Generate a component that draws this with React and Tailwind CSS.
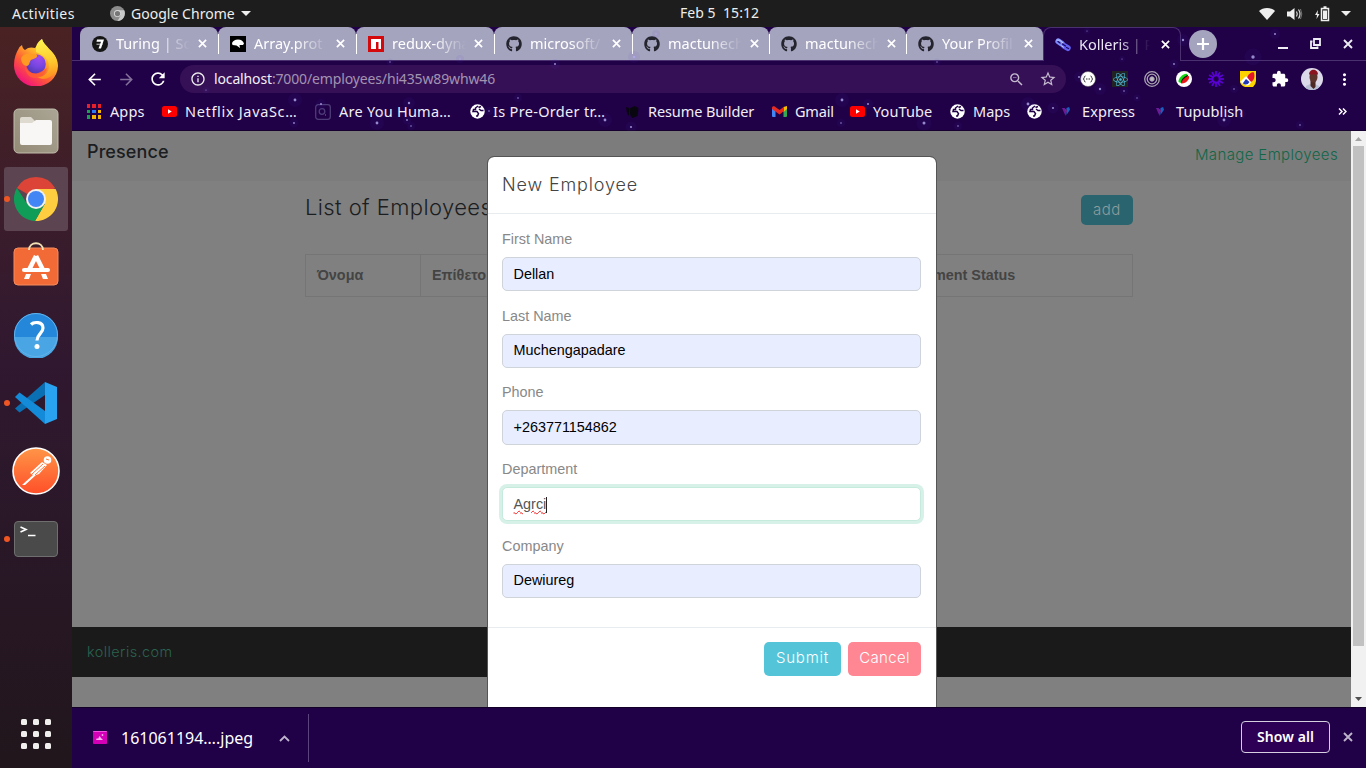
import React from "react";
import {
  MdArrowBack,
  MdArrowForward,
  MdRefresh,
  MdInfoOutline,
  MdZoomOut,
  MdStarBorder,
  MdExtension,
  MdMoreVert,
} from "react-icons/md";
import { FaGithub, FaReact } from "react-icons/fa";

/* ---------- dock icons ---------- */

function FirefoxIcon() {
  return (
    <svg width="46" height="48" viewBox="0 0 46 48" className="-mt-[3px]">
      <defs>
        <linearGradient id="ffBody" x1="0.85" y1="0.1" x2="0.25" y2="0.95">
          <stop offset="0" stopColor="#fff14a" />
          <stop offset="0.35" stopColor="#ffb02b" />
          <stop offset="0.65" stopColor="#ff5a36" />
          <stop offset="1" stopColor="#f0147c" />
        </linearGradient>
        <radialGradient id="ffGlobe" cx="0.65" cy="0.2" r="0.9">
          <stop offset="0" stopColor="#a04bf0" />
          <stop offset="0.5" stopColor="#7646e0" />
          <stop offset="1" stopColor="#4a36a8" />
        </radialGradient>
        <linearGradient id="ffTail" x1="0.5" y1="0" x2="0.6" y2="1">
          <stop offset="0" stopColor="#fff44f" />
          <stop offset="0.6" stopColor="#ffc62c" />
          <stop offset="1" stopColor="#ff8a1f" />
        </linearGradient>
      </defs>
      <path d="M6 10c0-1 2-2 3-3 .5 3 1.500 4 3 5 3-3 7-3 10-2 2-3 4-5 7-9 1 4 4 6 8 11l1 1c5 5 7 10 7 15A22 21 0 0 1 1 27c0-7 2-12 5-17z" fill="url(#ffBody)" />
      <path d="M23 9c1-4 3-6 6-8 1 4 4 6 7 10 5 4 8 9 8 15 0 6-3 11-7 13-5 3-10 2-13 0 8 0 12-5 12-11 0-7-6-11-13-14z" fill="url(#ffTail)" />
      <circle cx="23" cy="26" r="9.800" fill="url(#ffGlobe)" />
      <path d="M8 20c2-4 6-5 9-4 4 0 6-1 7 1 1 3-4 4-6 5-2 2-1 5-4 6-3 0-6-3-6-8z" fill="#ff9a22" />
      <path d="M12 28c2 6 8 9 13 7 3-1 5-3 9-5-2 7-7 10-12 10-6 0-10-5-10-12z" fill="#ff5f30" opacity=".75" />
    </svg>
  );
}

function FilesIcon() {
  return (
    <svg width="46" height="46" viewBox="0 0 46 46">
      <defs>
        <linearGradient id="filesBg" x1="0" y1="1" x2="1" y2="0">
          <stop offset="0" stopColor="#948b76" />
          <stop offset="1" stopColor="#aaa595" />
        </linearGradient>
      </defs>
      <rect x="1" y="1" width="44" height="44" rx="4.500" fill="url(#filesBg)" stroke="#c2bdad" strokeWidth="1" />
      <path d="M7 11a2 2 0 0 1 2-2h9l4 4h14a2 2 0 0 1 2 2v5H7z" fill="#dedad0" />
      <path d="M7 15h12l4-3h14a2 2 0 0 1 2 2v21a2 2 0 0 1-2 2H9a2 2 0 0 1-2-2z" fill="#f8f7f5" />
    </svg>
  );
}

function ChromeIcon() {
  return (
    <svg width="46" height="46" viewBox="0 0 46 46">
      <path d="M23 23 3.900 12A22 22 0 0 1 42.100 12z" fill="#db4437" />
      <path d="M23 13h19.600a22 22 0 0 1-20.600 32l9.700-17z" fill="#ffcd40" />
      <path d="M14.300 28 3.900 12A22 22 0 0 0 22 45l9.700-17z" fill="#0f9d58" />
      <circle cx="23" cy="23" r="10" fill="#f1f1f1" />
      <circle cx="23" cy="23" r="8" fill="#4285f4" />
    </svg>
  );
}

function SoftwareIcon() {
  return (
    <svg width="46" height="46" viewBox="0 0 46 46" className="-mt-2">
      <rect x="1" y="8" width="44" height="37" rx="4" fill="#f26a35" stroke="#f58c5e" strokeWidth="1" />
      <path d="M16 10c0-9 14-9 14 0" fill="none" stroke="#f3dfb4" strokeWidth="1.800" />
      <path d="M23 16l7 14M23 16l-7 14" stroke="#fff" strokeWidth="4.500" fill="none" strokeLinejoin="round" />
      <rect x="9" y="28" width="28" height="4" rx="2" fill="#fff" />
      <path d="M13 34h5l-2 5h-5zM28 34h5l2 5h-5z" fill="#fff" />
    </svg>
  );
}

function HelpIcon() {
  return (
    <svg width="46" height="46" viewBox="0 0 46 46">
      <circle cx="23" cy="23" r="22" fill="#2487d9" />
      <path d="M1 25a22 22 0 0 0 44 0z" fill="#49a5e4" />
      <circle cx="23" cy="23" r="21.500" fill="none" stroke="#62b2ea" strokeWidth="1" />
      <path d="M18 12.500c3-3 12-3 12 3.500 0 5.500-6 6-6 12.500" fill="none" stroke="#fff" strokeWidth="3.200" />
      <circle cx="24" cy="34.500" r="2.500" fill="#fff" />
    </svg>
  );
}

function CodeIcon() {
  return (
    <svg width="46" height="46" viewBox="0 0 46 46">
      <path d="M2 28.500 32 2v13L6.500 32.500z" fill="#0b6fb3" />
      <path d="M6.500 12.500 2 17 32 44V31z" fill="#148bd8" />
      <path d="M32 2l12 5v32l-12 5z" fill="#29a3f0" />
    </svg>
  );
}

function PostmanIcon() {
  return (
    <svg width="50" height="50" viewBox="0 0 50 50">
      <defs>
        <linearGradient id="pm" x1="0" y1="0" x2="0" y2="1">
          <stop offset="0" stopColor="#ff9547" />
          <stop offset="1" stopColor="#ff4f29" />
        </linearGradient>
      </defs>
      <circle cx="25" cy="25" r="23" fill="url(#pm)" stroke="#fff" strokeWidth="1.600" />
      <circle cx="36.500" cy="14" r="3.800" fill="#fff" />
      <path d="M31 16 19 27l3 2-11 10 3 0 11-10 3-1 8-9z" fill="#fff" />
      <path d="M32 18 21 28M34 20 24 29M35 13l3 1" stroke="#ff7a3d" strokeWidth="1" />
    </svg>
  );
}

function TerminalIcon() {
  return (
    <div className="flex h-9 w-11 items-start rounded-[4px] border border-[#6f6f6f] bg-[#4a4a4a] pt-[3px] pl-[5px]">
      <svg width="16" height="12" viewBox="0 0 16 12" fill="none" stroke="#fff" strokeWidth="1.600">
        <path d="M.5 2 6 4.500.5 7M8 10.500h7.500" />
      </svg>
    </div>
  );
}

const dock = [
  { icon: <FirefoxIcon /> },
  { icon: <FilesIcon /> },
  { icon: <ChromeIcon />, running: true, active: true },
  { icon: <SoftwareIcon /> },
  { icon: <HelpIcon /> },
  { icon: <CodeIcon />, running: true },
  { icon: <PostmanIcon /> },
  { icon: <TerminalIcon />, running: true },
];

function Dock() {
  return (
    <aside className="flex w-[72px] shrink-0 flex-col items-center bg-linear-to-b from-[#4a2223] via-[#301830] via-45% to-[#21161c] pt-1 pb-[13px]">
      <div className="flex flex-col gap-1">
        {dock.map((d, i) => (
          <div
            key={i}
            className={
              d.active
                ? "relative flex h-16 w-16 items-center justify-center rounded-[3px] bg-[#5c4450]"
                : "relative flex h-16 w-16 items-center justify-center"
            }
          >
            {d.icon}
            {d.running && <span className="absolute top-[29px] left-0 h-1.5 w-1.5 rounded-full bg-[#ef5623]" />}
          </div>
        ))}
      </div>
      <div className="mt-auto grid grid-cols-3 gap-1.5 pb-[6px]">
        {Array.from({ length: 9 }, (_, i) => (
          <span key={i} className="h-1.5 w-1.5 rounded-[1.5px] bg-[#f1efee]" />
        ))}
      </div>
    </aside>
  );
}

/* ---------- system bar ---------- */

function SystemBar() {
  return (
    <header className="grid h-[27px] shrink-0 grid-cols-[680px_200px_1fr] items-center bg-[#1d1d1d] text-[14px] text-[#eeeeec]">
      <div className="flex items-center pl-3">
        <span className="w-[98px] tracking-[0.45px]">Activities</span>
        <svg width="15" height="15" viewBox="0 0 16 16" className="mr-1.5">
          <circle cx="8" cy="8" r="8" fill="#8c8c8c" />
          <path d="M8 4.500h7a8 8 0 0 1-7 11.500l3.500-6z" fill="#c9c9c9" />
          <circle cx="8" cy="8" r="3.800" fill="#d8d8d8" />
          <circle cx="8" cy="8" r="2.800" fill="#777" />
        </svg>
        <span className="tracking-[0.03px]">Google Chrome</span>
        <svg width="10" height="5" viewBox="0 0 10 5" className="ml-1.5">
          <path d="M0 0h10L5 5z" fill="#eee" />
        </svg>
      </div>
      <span className="-mt-0.5 tracking-[0.05px] whitespace-pre">{"Feb 5  15:12"}</span>
      <div className="flex items-center justify-end pr-[15px]">
        <svg width="16" height="13" viewBox="0 0 16 13" className="mr-3">
          <path d="M0 4c4-4 12-4 16 0L8 13z" fill="#eee" />
        </svg>
        <svg width="16" height="14" viewBox="0 0 16 14" className="mr-3">
          <path d="M0 4.500h3L7.500 1v12L3 9.500H0z" fill="#eee" />
          <path d="M9.500 4.500q1.500 2.500 0 5M11.500 2.500q3 4.500 0 9" stroke="#ddd" fill="none" strokeWidth="1.200" />
          <path d="M13.500 2q2.600 5 0 10" stroke="#777" fill="none" />
        </svg>
        <svg width="15" height="16" viewBox="0 0 15 16" className="mr-[11px]">
          <path d="M3 4 0 9h2l-.500 4 3-5H2.500z" fill="#eee" />
          <path d="M6.500 2.500h7v12h-7zM8.500 1h3" stroke="#eee" strokeWidth="1.500" fill="none" />
          <path d="M8 4.500h4v8.500H8z" fill="#eee" />
        </svg>
        <svg width="10" height="5" viewBox="0 0 10 5">
          <path d="M0 0h10L5 5z" fill="#eee" />
        </svg>
      </div>
    </header>
  );
}

/* ---------- browser chrome ---------- */

const stars = [
  [295, 100, 1.4], [321, 104, 1], [377, 123, 1.4], [294, 123, 0.9], [411, 126, 0.8], [381, 115, 0.7],
  [390, 62, 0.7], [555, 64, 1], [518, 98, 0.8], [409, 103, 1.2], [407, 120, 0.9], [605, 120, 1.4], [631, 127, 1.1],
  [489, 111, 0.8], [842, 100, 1.4], [868, 104, 1], [924, 123, 1.5], [841, 123, 0.8], [958, 126, 0.8], [937, 62, 0.7],
  [1028, 104, 1.4], [1053, 108, 1.1], [1079, 77, 1], [1100, 89, 1.2], [1124, 91, 0.8], [1137, 98, 0.7],
  [1174, 64, 0.9], [1183, 40, 1.2], [1275, 34, 1], [1253, 57, 1.7], [1234, 89, 0.8], [1224, 120, 1.4],
  [1300, 125, 0.8], [1241, 114, 1], [634, 57, 1.2], [460, 59, 0.8], [656, 34, 0.8], [1122, 59, 0.6], [206, 90, 0.6], [1087, 31, 0.6],
];

function Stars() {
  return (
    <svg className="pointer-events-none absolute inset-0" width="1294" height="104" viewBox="72 27 1294 104">
      {stars.map(([x, y, r], i) => (
        <g key={i}>
          <circle cx={x} cy={y} r={r * 5} fill="#5a3ad0" opacity="0.07" />
          <circle cx={x} cy={y} r={r} fill="#b4abf0" opacity="0.8" />
        </g>
      ))}
    </svg>
  );
}

function Cross({ size = 10, color = "#fff", className = "" }) {
  return (
    <svg width={size} height={size} viewBox="0 0 10 10" fill="none" stroke={color} strokeWidth="1.900" className={"shrink-0 " + className}>
      <path d="M1 1l8 8M9 1l-8 8" />
    </svg>
  );
}

function TuringIcon() {
  return (
    <svg width="16" height="16" viewBox="0 0 16 16">
      <circle cx="8" cy="8" r="8" fill="#151515" />
      <path d="M5 3.500h7L9 12.500H6.500L9 5.800H4.500z" fill="#fff" />
      <path d="M4.500 8.200h6" stroke="#fff" strokeWidth=".8" />
    </svg>
  );
}

function MdnIcon() {
  return (
    <svg width="16" height="16" viewBox="0 0 16 16">
      <path d="M0 0h16v16H0z" fill="#000" />
      <path d="M2 7c1-2 3-3.500 6-3.500s5 1.500 6 4l-1 1.500H9.500L10 12 6.500 9.500 2.500 9z" fill="#fff" />
    </svg>
  );
}

function NpmIcon() {
  return (
    <svg width="16" height="16" viewBox="0 0 16 16">
      <path d="M0 0h16v16H0z" fill="#d4090b" />
      <path d="M3 3h10v10h-2.500V6H8v7H3z" fill="#fff" />
    </svg>
  );
}

function ChainIcon() {
  return (
    <svg width="16" height="14" viewBox="0 0 16 14">
      <rect x="0" y="1.500" width="10" height="6" rx="3" transform="rotate(35 5 4.500)" fill="#7f8cff" />
      <rect x="6" y="6" width="10" height="6" rx="3" transform="rotate(30 11 9)" fill="#6460f2" />
      <path d="M3 3.500l2 1.500M7.500 6l3 2M11.500 9.500l2 1" stroke="#1c0a60" strokeWidth="1.300" strokeLinecap="round" />
      <path d="M1.500 2Q5 1 8 5M6 7.500l3 2" stroke="#bccaff" strokeWidth="1" fill="none" />
    </svg>
  );
}

const tabs = [
  { icon: <TuringIcon />, title: "Turing | So", wide: true },
  { icon: <MdnIcon />, title: "Array.prot", wide: true },
  { icon: <NpmIcon />, title: "redux-dyna", wide: true },
  { icon: <FaGithub size={16} color="#24242e" />, title: "microsoft/", wide: true },
  { icon: <FaGithub size={16} color="#24242e" />, title: "mactunech" },
  { icon: <FaGithub size={16} color="#24242e" />, title: "mactunech" },
  { icon: <FaGithub size={16} color="#24242e" />, title: "Your Profil" },
];

function Tab({ icon, title, active, first, wide }) {
  const look = active
    ? "h-[34px] w-[138px] rounded-t-[8px] border border-b-0 border-[#4b3070] bg-[#200047] pl-[11px] text-[#e9e6f1]"
    : wide
      ? "h-[33px] w-[138px] rounded-t-[8px] bg-[#a5a4bf] pl-3 text-white"
      : "h-[33px] w-[137px] rounded-t-[8px] bg-[#a5a4bf] pl-3 text-white";
  return (
    <div className={"relative flex shrink-0 items-center " + look}>
      {!active && !first && <span className="absolute top-[7px] left-0 h-5 w-px bg-white" />}
      <span className="flex w-4 shrink-0 justify-center">{icon}</span>
      <span className={(active ? "w-[71px] " : "w-[74px] ") + "ml-2 mask-r-from-55% mask-r-to-100% text-[14.5px] whitespace-nowrap"}>
        {title}
      </span>
      <Cross size={9} className={active ? "ml-[11px]" : "ml-2"} />
    </div>
  );
}

function TabStrip() {
  return (
    <div className="flex h-[34px] border-b border-[#4b3070]">
      <div className="flex pl-2">
        {tabs.map((t, i) => (
          <Tab key={i} {...t} first={i === 0} />
        ))}
        <Tab icon={<ChainIcon />} title="Kolleris | P" active />
      </div>
      <div className="ml-2 flex h-7 w-7 items-center justify-center self-center rounded-full bg-[#a5a4bf]">
        <svg width="12" height="12" viewBox="0 0 12 12" stroke="#fff" strokeWidth="2.200"><path d="M6 0v12M0 6h12" /></svg>
      </div>
      <div className="ml-auto flex items-center gap-[22px] pr-[13px] text-[#eeecf3]">
        <span className="mt-2 h-0.5 w-2.5 bg-[#eeecf3]" />
        <svg width="11" height="11" viewBox="0 0 11 11" fill="none" stroke="currentColor" strokeWidth="1.800">
          <path d="M4 1h6v6H4zM2.500 3.500H1V10h6.500V8.500" />
        </svg>
        <Cross size={10} color="#eeecf3" />
      </div>
    </div>
  );
}

function Slot({ children }) {
  return <span className="flex w-8 shrink-0 items-center justify-center">{children}</span>;
}

function Toolbar() {
  return (
    <div className="flex h-9 items-center pl-1.5 text-white">
      <Slot><MdArrowBack size={19} /></Slot>
      <Slot><MdArrowForward size={19} color="#82709b" /></Slot>
      <Slot><MdRefresh size={20} /></Slot>
      <div className="ml-1.5 flex h-7 w-[886px] shrink-0 items-center rounded-full bg-[#361057] pl-2.5 text-[#c6bccf]">
        <MdInfoOutline size={16} color="#eee" className="mr-2" />
        <span className="-mt-0.5 text-[14px] tracking-[-0.14px] text-[#a294b1]">
          <span className="text-[#f2eff5]">localhost</span>:7000/employees/hi435w89whw46
        </span>
        <span className="ml-auto flex">
          <Slot><MdZoomOut size={17} /></Slot>
          <Slot><MdStarBorder size={18} /></Slot>
        </span>
        <span className="w-0.5" />
      </div>
      <span className="w-1.5 shrink-0" />
      <Slot>
        <svg width="16" height="16" viewBox="0 0 16 16">
          <circle cx="8" cy="8" r="7.500" fill="#fff" stroke="#555" strokeWidth=".5" />
          <path d="M5.500 5q-1.200 0-1.200 1.500L3.500 8l.8 1.500q0 1.500 1.200 1.500M10.500 5q1.200 0 1.200 1.500l.8 1.500-.8 1.500q0 1.500-1.200 1.500M6 8h1M7.500 8h1M9 8h1" fill="none" stroke="#333" />
        </svg>
      </Slot>
      <Slot>
        <span className="flex h-4 w-4 items-center justify-center bg-[#222]"><FaReact size={15} color="#4fb9d8" /></span>
      </Slot>
      <Slot>
        <svg width="16" height="16" viewBox="0 0 16 16" fill="none" stroke="#aaa4b2">
          <circle cx="8" cy="8" r="7.300" strokeWidth="1.300" />
          <circle cx="8" cy="8" r="4.800" strokeWidth="1.300" />
          <circle cx="8" cy="8" r="2.200" fill="#bbb" />
        </svg>
      </Slot>
      <Slot>
        <svg width="16" height="16" viewBox="0 0 16 16">
          <circle cx="8" cy="8" r="8" fill="#fff" />
          <path d="M2.500 11C2 7 8 2 11 3l1 2-7 7z" fill="#16d916" />
          <path d="M5 11.500C5 8 10 4 12 4l-1 4-5 4z" fill="#111" />
          <path d="M5 12.500C6 9 10 5 13 5c1 3-3 8-8 7.500z" fill="#e81919" />
        </svg>
      </Slot>
      <Slot>
        <svg width="16" height="16" viewBox="0 0 16 16" stroke="#5a00d6" strokeWidth="1.900" fill="none">
          <circle cx="8" cy="8" r="3.600" />
          {[0, 30, 60, 90, 120, 150, 180, 210, 240, 270, 300, 330].map((a) => (
            <path key={a} d="M8 4.500V0" transform={`rotate(${a} 8 8)`} strokeWidth="1.700" />
          ))}
        </svg>
      </Slot>
      <Slot>
        <svg width="16" height="16" viewBox="0 0 16 16">
          <path d="M0 0h16v10q0 3-3 6H5Q0 14 0 10z" fill="#fdd300" />
          <path d="M7 8C7 4 11 1 13.500 1 16 6 13 11 10 11z" fill="#e5152a" />
          <path d="M6 5 0 11l5 3q4 2 6-3z" fill="#fff" />
          <path d="M6 8l3.500 3Q8 14 5 13.500 3 13 3 12z" fill="#2038b5" />
        </svg>
      </Slot>
      <Slot><MdExtension size={18} /></Slot>
      <Slot>
        <svg width="22" height="22" viewBox="0 0 22 22">
          <defs><clipPath id="av"><circle cx="11" cy="11" r="11" /></clipPath></defs>
          <g clipPath="url(#av)">
            <path d="M0 0h22v22H0z" fill="#dcd9ea" />
            <path d="M5 22v-4l4-2h5l4 2v4z" fill="#b9c0d4" />
            <path d="M9.500 12h5v7l-2 2-3-3z" fill="#4d2923" />
            <ellipse cx="12.500" cy="9" rx="4" ry="5.500" fill="#5c342b" />
            <path d="M8 6.500c0-6.500 9-6.500 9 0z" fill="#8a1420" />
          </g>
        </svg>
      </Slot>
      <Slot><MdMoreVert size={19} /></Slot>
    </div>
  );
}

function AppsIcon() {
  const colors = ["#e8202a", "#e8202a", "#e8202a", "#17a34a", "#2f7cf0", "#f5b400", "#17a34a", "#f5b400", "#f5b400"];
  return (
    <span className="grid grid-cols-3 gap-[2px]">
      {colors.map((c, i) => (
        <svg key={i} width="3.500" height="3.500"><path d="M0 0h4v4H0z" fill={c} /></svg>
      ))}
    </span>
  );
}

function YouTubeIcon() {
  return (
    <svg width="15" height="11" viewBox="0 0 15 11">
      <rect width="15" height="11" rx="2.500" fill="#f00" />
      <path d="M6 3.300v4.400l3.800-2.200z" fill="#fff" />
    </svg>
  );
}

function GlobeIcon() {
  return (
    <svg width="15" height="15" viewBox="0 0 15 15">
      <circle cx="7.500" cy="7.500" r="7.200" fill="#fff" />
      <path d="M8 2 5.500 4v1.500H3.500l-.5 2h4l1.500 2-1 2.500-1.500 0M8.500 3.500 11 2.500M9 5l2 1.500 2.500 0" fill="none" stroke="#200047" strokeWidth="1.500" />
    </svg>
  );
}

function QuizIcon() {
  return (
    <svg width="16" height="16" viewBox="0 0 16 16" fill="none" stroke="#4d3c78">
      <rect x=".7" y=".7" width="14.600" height="14.600" rx="2.500" strokeWidth="1.300" />
      <circle cx="7" cy="7.500" r="2.800" strokeWidth="1.300" />
      <path d="M10.500 10v2" />
    </svg>
  );
}

function ResumeIcon() {
  return (
    <svg width="14" height="14" viewBox="0 0 14 14">
      <path d="M1 2l3 1v8L2 8zM4.500 3.500l5-2.500 4 2-1 8-5 2-2-2z" fill="#08060f" />
    </svg>
  );
}

function GmailIcon() {
  return (
    <svg width="15" height="11" viewBox="0 0 15 11">
      <path d="M0 2v8a1 1 0 0 0 1 1h2.500V4z" fill="#4285f4" />
      <path d="M15 2v8a1 1 0 0 1-1 1h-2.500V4z" fill="#34a853" />
      <path d="M11.500 1 15 0v3l-3.500 3z" fill="#fbbc04" />
      <path d="M0 2C0 0 2 0 3 .7L7.500 4 12 .7V5L7.500 8.500 0 3z" fill="#ea2a20" />
    </svg>
  );
}

function BrandVIcon() {
  return (
    <svg width="8" height="9" viewBox="0 0 9 10" opacity="0.85">
      <path d="M0 1h3l2 4-1 5z" fill="#7a1fa8" />
      <path d="M5 1l3-1 1 3-4 6z" fill="#1870d8" />
      <path d="M3 2l2 1v3z" fill="#d01b6a" />
    </svg>
  );
}

const bookmarks = [
  { icon: <AppsIcon />, label: "Apps", box: "w-[75px]", text: "tracking-[0.1px]" },
  { icon: <YouTubeIcon />, label: "Netflix JavaSc…", box: "w-[154px]", text: "tracking-[0.67px]" },
  { icon: <QuizIcon />, label: "Are You Huma…", box: "w-[154px]", text: "tracking-[0.25px]" },
  { icon: <GlobeIcon />, label: "Is Pre-Order tr…", box: "w-[155px]", text: "tracking-[0.32px]" },
  { icon: <ResumeIcon />, label: "Resume Builder", box: "w-[147px]", text: "tracking-[-0.1px]" },
  { icon: <GmailIcon />, label: "Gmail", box: "w-[78px]", text: "tracking-[-0.2px]" },
  { icon: <YouTubeIcon />, label: "YouTube", box: "w-[100px]", text: "tracking-[0.1px]" },
  { icon: <GlobeIcon />, label: "Maps", box: "w-[77px]", text: "tracking-[0px]" },
  { icon: <GlobeIcon />, label: "", box: "w-8", text: "" },
  { icon: <BrandVIcon />, label: "Express", box: "w-[94px]", text: "tracking-[0.1px]" },
  { icon: <BrandVIcon />, label: "Tupublish", box: "w-[110px]", text: "tracking-[0.1px]" },
];

function BookmarkBar() {
  return (
    <div className="flex h-[34px] items-center border-b border-[#16002f] pb-1 pl-[14px] text-[14.5px] text-[#f1eef5]">
      {bookmarks.map((b, i) => (
        <div key={i} className={"flex shrink-0 items-center gap-2 whitespace-nowrap " + b.box}>
          <span className="flex w-4 shrink-0 justify-center">{b.icon}</span>
          <span className={b.text}>{b.label}</span>
        </div>
      ))}
      <svg width="9" height="7" viewBox="0 0 9 7" className="mr-[19px] ml-auto" fill="none" stroke="white" strokeWidth="1.500">
        <path d="M1 .5 4 3.500 1 6.500M5 .5 8 3.500 5 6.500" />
      </svg>
    </div>
  );
}

/* ---------- page ---------- */

function PageNav() {
  return (
    <nav className="flex h-[50px] shrink-0 justify-between bg-[#7c7c7c] pr-[13px] pl-[15px]">
      <span className="pt-2 font-['Inter'] text-[18px] leading-[26px] font-medium tracking-[0.1px] text-[#1b1d20]">Presence</span>
      <span className="pt-[13px] font-['Inter'] text-[15px] leading-[22px] font-light tracking-[0.37px] text-[#116647]">Manage Employees</span>
    </nav>
  );
}

function EmployeeList() {
  return (
    <main className="flex h-[446px] shrink-0 flex-col pr-[218px] pl-[233px] pt-[14px]">
      <div className="flex justify-between">
        <h1 className="font-['Inter'] text-[22px] leading-6 font-light tracking-[0.4px] text-[#1b1d20]">List of Employees</h1>
        <button className="h-[30px] w-[52px] rounded-[5px] bg-[#2a646e] font-['Inter'] text-[15px] font-light tracking-[0.5px] text-[#8d9c9f]">add</button>
      </div>
      <div className="mt-[29px] flex h-[43px] border border-[#757575] font-['Liberation_Sans'] text-[14.4px] font-bold text-[#444]">
        <div className="flex w-[115px] items-center border-r border-[#757575] pl-[11px]">Όνομα</div>
        <div className="flex w-[448px] items-center pl-[11px]">Επίθετο</div>
        <div className="flex items-center whitespace-nowrap pl-[12px]">Employment Status</div>
      </div>
    </main>
  );
}

function Field({ label, value, focused }) {
  return (
    <div className="mb-[14.4px]">
      <label className="block pb-[7.2px] leading-[20.9px] text-[#888]">{label}</label>
      {focused ? (
        <div className="flex h-[34.2px] items-center rounded-[5px] border border-[#c5ebdd] bg-white px-[10.500px] pt-px text-[#555] ring-[3px] ring-[#d7f1e8]">
          <span className="underline decoration-[#f02020] decoration-wavy decoration-[0.7px] underline-offset-1">{value}</span>
          <span className="h-4 w-px bg-[#222]" />
        </div>
      ) : (
        <div className="flex h-[34.2px] items-center rounded-[5px] border border-[#ced4da] bg-[#e8edff] px-[10.500px] pt-px text-black">
          {value}
        </div>
      )}
    </div>
  );
}

function Modal() {
  return (
    <section className="absolute top-[25px] left-[415px] flex h-[600px] w-[450px] flex-col rounded-[7px] border border-[#555] bg-white bg-clip-padding font-['Liberation_Sans'] text-[14.4px]">
      <header className="flex h-[57px] shrink-0 items-center border-b border-[#e9ecef] px-[14px] pb-0.5 font-['Inter'] text-[18px] font-light tracking-[0.85px] text-[#444]">
        New Employee
      </header>
      <div className="h-[413px] shrink-0 pt-[14.9px] pr-[15px] pl-[14px]">
        <Field label="First Name" value="Dellan" />
        <Field label="Last Name" value="Muchengapadare" />
        <Field label="Phone" value="+263771154862" />
        <Field label="Department" value="Agrci" focused />
        <Field label="Company" value="Dewiureg" />
      </div>
      <footer className="flex justify-end gap-[7px] border-t border-[#e9ecef] pt-[14.4px] pr-[15px] font-['Inter'] text-[15px] font-light text-white">
        <button className="h-[34px] w-[77px] rounded-[5px] bg-[#54c5d9] pb-[3px] tracking-[0.75px]">Submit</button>
        <button className="h-[34px] w-[73px] rounded-[5px] bg-[#ff8793] pb-[3px] tracking-[0.3px]">Cancel</button>
      </footer>
    </section>
  );
}

function Scrollbar() {
  return (
    <div className="flex w-[15px] shrink-0 flex-col items-center bg-[#f1f1f1]">
      <svg width="7" height="4" viewBox="0 0 7 4" className="mt-1.5 mb-[5px] shrink-0"><path d="M0 4h7L3.500 0z" fill="#a3a3a3" /></svg>
      <div className="h-[500px] w-[11px] bg-[#c1c1c1]" />
      <svg width="7" height="4" viewBox="0 0 7 4" className="mt-auto mb-1.5 shrink-0"><path d="M0 0h7L3.500 4z" fill="#505050" /></svg>
    </div>
  );
}

function DownloadBar() {
  return (
    <div className="flex h-[61px] shrink-0 items-center border-t border-[#120029] bg-[#200047] pl-[21px] text-white">
      <svg width="14" height="13" viewBox="0 0 14 13" className="-mt-0.5">
        <rect width="14" height="13" rx="1" fill="#d400b8" />
        <path d="M0 1a1 1 0 0 1 1-1h12a1 1 0 0 1 1 1z" fill="#f050dd" />
        <path d="M3 9l1-2 1 1 1.500-3 1.500 2 2 2z" fill="#f7b0ee" />
        <circle cx="9.500" cy="4" r=".9" fill="#f7b0ee" />
      </svg>
      <span className="ml-3.5 w-[158px] text-[16px] tracking-[0px]">161061194….jpeg</span>
      <svg width="11" height="7" viewBox="0 0 11 7" fill="none" stroke="#bdb3cb" strokeWidth="1.800"><path d="M1 6l4.500-4.500L10 6" /></svg>
      <span className="ml-[18px] h-12 w-px bg-[#5c447c]" />
      <div className="-mt-0.5 mr-[13px] ml-auto flex items-center gap-[13px]">
        <button className="h-8 w-[89px] rounded-[4px] border border-[#d5cfe0] bg-[#2d0055] pb-0.5 text-[14px] font-semibold tracking-[0.1px]">Show all</button>
        <Cross size={10} color="#bdb3cb" />
      </div>
    </div>
  );
}

export default function App() {
  return (
    <div className="flex h-[768px] w-[1366px] flex-col overflow-hidden font-['Noto_Sans',sans-serif]">
      <SystemBar />
      <div className="flex min-h-0 flex-1">
        <Dock />
        <div className="flex min-w-0 flex-1 flex-col">
          <div className="relative h-[104px] shrink-0 bg-[#200047]">
            <TabStrip />
            <Toolbar />
            <BookmarkBar />
            <Stars />
          </div>
          <div className="flex h-[576px] shrink-0 overflow-hidden">
            <div className="relative flex min-w-0 flex-1 flex-col overflow-hidden bg-[#808080]">
              <PageNav />
              <EmployeeList />
              <footer className="flex h-[50px] shrink-0 items-center bg-[#1a1a1a] pl-[15px] font-['Inter'] text-[14.4px] font-light tracking-[0.45px] text-[#2a6350]">
                kolleris.com
              </footer>
              <Modal />
            </div>
            <Scrollbar />
          </div>
          <DownloadBar />
        </div>
      </div>
    </div>
  );
}
